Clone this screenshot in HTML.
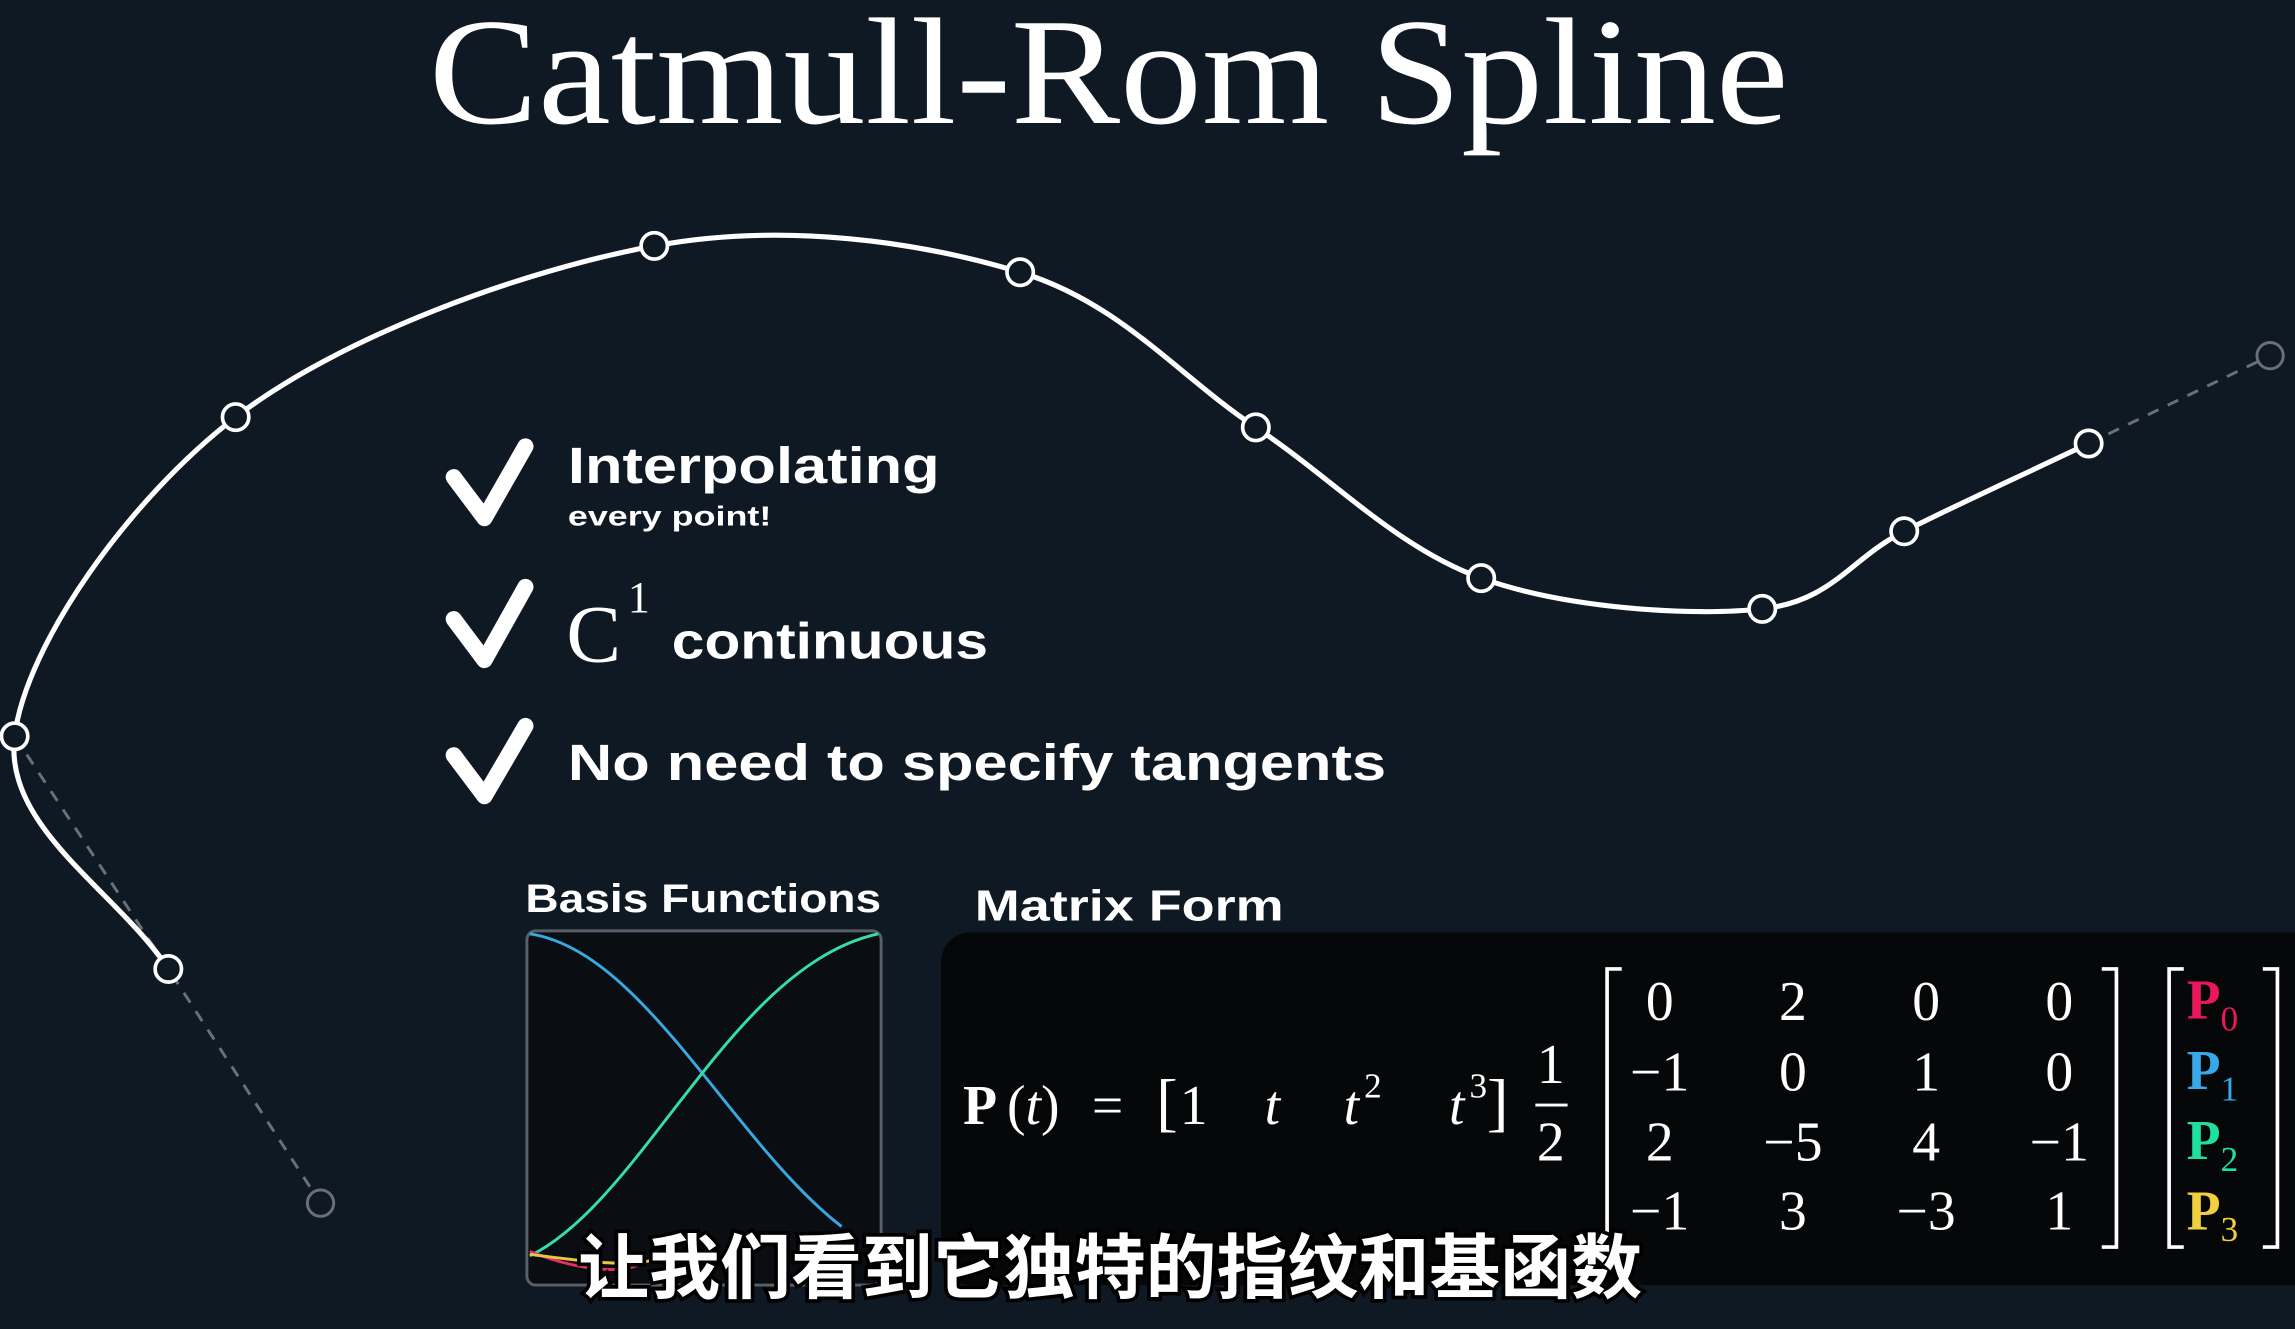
<!DOCTYPE html>
<html><head><meta charset="utf-8"><style>
html,body{margin:0;padding:0;background:#0f1923;overflow:hidden}
svg{display:block}
.s{font-family:"Liberation Sans","DejaVu Sans",sans-serif;font-weight:bold;fill:#fff}
.m{font-family:"Liberation Serif",serif;fill:#fff}
</style></head><body>
<svg width="2295" height="1329" viewBox="0 0 1568 908" preserveAspectRatio="none" xmlns="http://www.w3.org/2000/svg">
<rect width="1568" height="908" fill="#0f1923"/>
<text x="293" y="84" class="m" font-size="104" textLength="929" lengthAdjust="spacingAndGlyphs">Catmull-Rom Spline</text>
<g stroke="#6a7078" stroke-width="2" stroke-dasharray="8,7" fill="none">
<path d="M10 503 L115 662 L219 822"/>
<path d="M1427 303 L1551 243"/>
</g>
<path d="M115 662 C80.2 608.8 2.3 565.8 10 503 C17.7 440.2 88.2 340.8 161 285 C233.8 229.2 357.7 184.5 447 168 C536.3 151.5 628.5 165.3 697 186 C765.5 206.7 805.5 257.2 858 292 C910.5 326.8 954.3 374.3 1012 395 C1069.7 415.7 1155.8 421.3 1204 416 C1252.2 410.7 1263.8 381.8 1301 363 C1338.2 344.2 1385.3 323 1427 303" fill="none" stroke="#fff" stroke-width="3.5"/>
<g fill="#0f1923" stroke="#fff" stroke-width="2.5">
<circle cx="10" cy="503" r="9"/><circle cx="161" cy="285" r="9"/><circle cx="447" cy="168" r="9"/><circle cx="697" cy="186" r="9"/><circle cx="858" cy="292" r="9"/><circle cx="1012" cy="395" r="9"/><circle cx="1204" cy="416" r="9"/><circle cx="1301" cy="363" r="9"/><circle cx="1427" cy="303" r="9"/><circle cx="115" cy="662" r="9"/>
</g>
<g fill="#0f1923" stroke="#6a7078" stroke-width="2"><circle cx="219" cy="822" r="9"/><circle cx="1551" cy="243" r="9"/></g>
<g fill="none" stroke="#fff" stroke-width="11" stroke-linecap="round" stroke-linejoin="round">
<path d="M310 326 L331 354 L359 305"/>
<path d="M310 423 L331 451 L359 401"/>
<path d="M310 516 L331 544 L359 496"/>
</g>
<text x="388" y="330" class="s" font-size="35" textLength="254" lengthAdjust="spacingAndGlyphs">Interpolating</text>
<text x="388" y="359" class="s" font-size="19" textLength="139" lengthAdjust="spacingAndGlyphs">every point!</text>
<text x="387" y="452" class="m" font-size="56">C</text>
<text x="429" y="418" class="m" font-size="30">1</text>
<text x="459" y="450" class="s" font-size="35" textLength="216" lengthAdjust="spacingAndGlyphs">continuous</text>
<text x="388" y="533" class="s" font-size="35" textLength="559" lengthAdjust="spacingAndGlyphs">No need to specify tangents</text>
<text x="359" y="623" class="s" font-size="27" textLength="243" lengthAdjust="spacingAndGlyphs">Basis Functions</text>
<text x="666" y="629" class="s" font-size="30" textLength="211" lengthAdjust="spacingAndGlyphs">Matrix Form</text>
<rect x="360" y="636" width="242" height="242" rx="6" fill="#0a0d12" stroke="#5a6068" stroke-width="2"/>
<path d="M362 638 C440 650 500 780 575 838" fill="none" stroke="#38a8e0" stroke-width="2"/>
<path d="M362 858 C440 820 500 660 600 638" fill="none" stroke="#34e0a8" stroke-width="2"/>
<path d="M362 855 C400 870 430 870 440 862" fill="none" stroke="#e83060" stroke-width="2"/>
<path d="M362 857 C400 862 430 866 450 860" fill="none" stroke="#e8c840" stroke-width="2"/>
<rect x="643" y="637" width="960" height="241" rx="20" fill="#050709"/>
<g class="m" font-size="38">
<text x="658" y="768" font-weight="bold">P</text>
<text x="688" y="768">(<tspan font-style="italic">t</tspan>)</text>
<text x="746" y="768">=</text>
<text x="790" y="768" font-size="44">[</text>
<text x="806" y="768">1</text>
<text x="864" y="768" font-style="italic">t</text>
<text x="918" y="768" font-style="italic">t</text><text x="932" y="750" font-size="24">2</text>
<text x="990" y="768" font-style="italic">t</text><text x="1004" y="750" font-size="24">3</text>
<text x="1016" y="768" font-size="44">]</text>
<text x="1050" y="740">1</text><rect x="1049" y="754" width="22" height="2" fill="#fff"/><text x="1050" y="793">2</text>
<g text-anchor="middle">
<text x="1134" y="697">0</text><text x="1225" y="697">2</text><text x="1316" y="697">0</text><text x="1407" y="697">0</text>
<text x="1134" y="745">−1</text><text x="1225" y="745">0</text><text x="1316" y="745">1</text><text x="1407" y="745">0</text>
<text x="1134" y="793">2</text><text x="1225" y="793">−5</text><text x="1316" y="793">4</text><text x="1407" y="793">−1</text>
<text x="1134" y="840">−1</text><text x="1225" y="840">3</text><text x="1316" y="840">−3</text><text x="1407" y="840">1</text>
</g>
<text x="1494" y="696" font-weight="bold" fill="#e8185a">P<tspan font-size="24" font-weight="normal" dy="8">0</tspan></text>
<text x="1494" y="744" font-weight="bold" fill="#38a8e8">P<tspan font-size="24" font-weight="normal" dy="8">1</tspan></text>
<text x="1494" y="792" font-weight="bold" fill="#20e0a0">P<tspan font-size="24" font-weight="normal" dy="8">2</tspan></text>
<text x="1494" y="840" font-weight="bold" fill="#f0d040">P<tspan font-size="24" font-weight="normal" dy="8">3</tspan></text>
</g>
<g fill="none" stroke="#fff" stroke-width="2.5">
<path d="M1108 662 H1098 V852 H1108"/><path d="M1436 662 H1446 V852 H1436"/>
<path d="M1492 662 H1482 V852 H1492"/><path d="M1546 662 H1556 V852 H1546"/>
</g>
<text x="395" y="883" font-family="'Liberation Sans','Noto Sans CJK SC',sans-serif" font-weight="bold" font-size="48" fill="#fff" stroke="#000" stroke-width="5" paint-order="stroke" textLength="727" lengthAdjust="spacingAndGlyphs">让我们看到它独特的指纹和基函数</text>
</svg>
</body></html>
